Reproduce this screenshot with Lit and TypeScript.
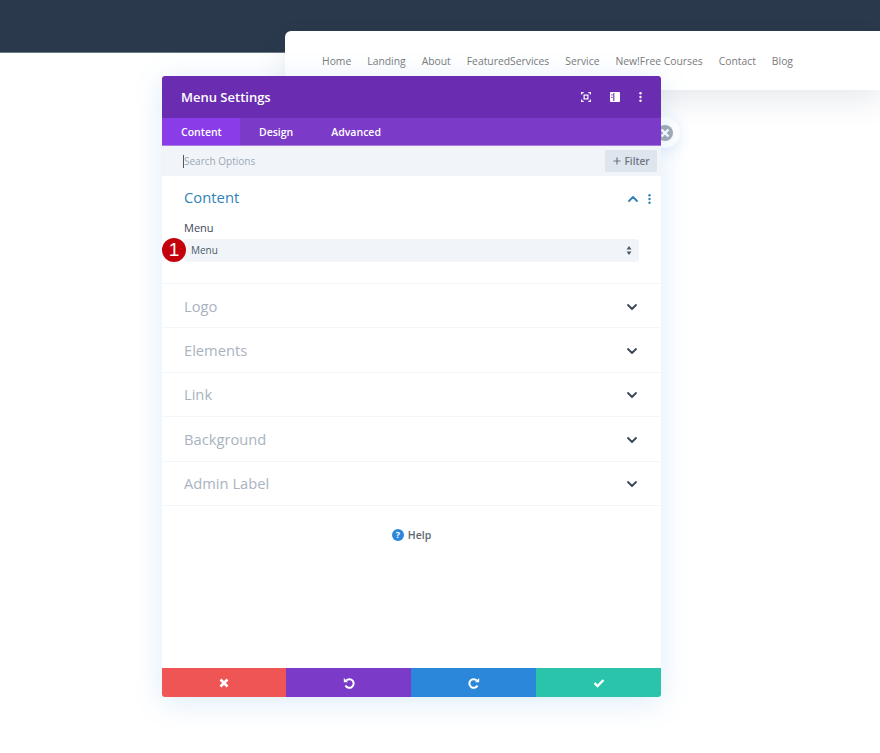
import { LitElement, html, css } from "lit";
import { customElement } from "lit/decorators.js";

const chevronDown = html`<svg class="chev" width="12" height="8" viewBox="0 0 12 8"><path d="M2 2l4 4 4-4" fill="none" stroke="#3a4656" stroke-width="1.800" stroke-linecap="round" stroke-linejoin="round"/></svg>`;
const chevronUp = html`<svg width="12" height="8" viewBox="0 0 12 8"><path d="M2 6l4-4 4 4" fill="none" stroke="#2f7fb8" stroke-width="1.800" stroke-linecap="round" stroke-linejoin="round"/></svg>`;

@customElement("app-root")
export class AppRoot extends LitElement {
  static styles = css`
    :host { display: block; position: relative; height: 753px; overflow: hidden; background: #fff; font-family: "Open Sans", "Liberation Sans", sans-serif; }
    .band { height: 53px; background: #2b394c; border-bottom: 1px solid #6d7685; box-sizing: border-box; }
    .site { position: absolute; left: 285px; top: 31px; right: 0; height: 59px; background: #fff; border-radius: 6px 0 0 0; box-shadow: 0 12px 28px rgba(40, 60, 90, .10); display: flex; align-items: center; gap: 16px; padding: 1px 0 0 37px; box-sizing: border-box; font-size: 10.350px; color: #7b7b7b; }
    .close { position: absolute; left: 645px; top: 117px; width: 35px; height: 31px; border-radius: 0 16px 16px 0; background: #fff; box-shadow: 0 4px 14px rgba(60, 120, 220, .12); display: flex; align-items: center; justify-content: flex-end; padding-right: 7px; box-sizing: border-box; }
    .modal { position: absolute; left: 162px; top: 76px; width: 499px; height: 621px; background: #fff; border-radius: 3px; display: flex; flex-direction: column; box-shadow: 0 5px 30px rgba(43, 135, 218, .16); overflow: hidden; }
    .head { height: 42px; flex: none; background: #6a2cb0; color: #fff; display: flex; align-items: center; justify-content: space-between; padding: 0 19px; font-size: 13px; font-weight: 600; }
    .head-icons { display: flex; align-items: center; gap: 19px; }
    .head-icons svg { display: block; }
    .tabs { flex: none; background: #7c3ac9; color: #fff; display: flex; font-size: 10.500px; font-weight: 600; border-bottom: 1px solid #a87be0; height: 27px; }
    .tab { display: flex; align-items: center; padding: 0 19px; }
    .tab.on { background: #8a3ce8; width: 78px; box-sizing: border-box; }
    .search { height: 30px; flex: none; background: #f1f5f9; display: flex; align-items: center; justify-content: space-between; padding: 0 4px 0 21px; }
    .placeholder { font-size: 10px; color: #9aa7b6; border-left: 1px solid #4c5866; line-height: 13px; }
    .filter { width: 52px; height: 22px; background: #dfe5ec; border-radius: 2px; font-size: 10px; font-weight: 600; color: #6b7786; display: flex; align-items: center; justify-content: center; gap: 4px; }
    .body { flex: 1; display: flex; flex-direction: column; }
    .open { height: 108px; flex: none; padding: 11px 22px 0; box-sizing: border-box; border-bottom: 1px solid #f3f5f8; position: relative; }
    .sec-head { display: flex; align-items: center; justify-content: space-between; height: 20px; }
    .sec-title { font-size: 14.800px; color: #2f82b7; }
    .sec-tools { display: flex; align-items: center; gap: 9px; margin: 4px -12px 0 0; }
    .label { font-size: 11px; color: #3d4957; font-weight: 500; margin-top: 13px; line-height: 16px; }
    .select { height: 23px; margin-top: 3px; background: #f1f5f9; border-radius: 3px; display: flex; align-items: center; justify-content: space-between; padding: 0 7px 1px; box-sizing: border-box; font-size: 10px; font-weight: 500; color: #4d5966; }
    .badge { position: absolute; left: 0; top: 62px; width: 24px; height: 24px; border-radius: 50%; background: #c4000c; color: #fff; display: flex; align-items: center; justify-content: center; font-family: "Liberation Sans", sans-serif; font-size: 19px; }
    .row { height: 44.400px; flex: none; box-sizing: border-box; border-bottom: 1px solid #f3f5f8; display: flex; align-items: center; justify-content: space-between; padding: 0 23px 0 22px; font-size: 14.700px; color: #a9b3bf; }
    .chev { margin-top: 2px; }
    .help { display: flex; align-items: center; justify-content: center; gap: 4px; margin-top: 22px; font-size: 10.500px; font-weight: 600; color: #5b6672; }
    .foot { height: 29px; flex: none; display: grid; grid-template-columns: 124px 125px 125px 125px; }
    .foot div { display: flex; align-items: center; justify-content: center; }
    .r { background: #ef5555; } .p { background: #7c3ac9; } .b { background: #2b87da; } .g { background: #29c4a9; }
  `;

  render() {
    const nav = ["Home", "Landing", "About", "FeaturedServices", "Service", "New!Free Courses", "Contact", "Blog"];
    const rows = ["Logo", "Elements", "Link", "Background", "Admin Label"];
    return html`
      <div class="band"></div>
      <div class="site">${nav.map((n) => html`<span>${n}</span>`)}</div>
      <div class="close">
        <svg width="16" height="16" viewBox="0 0 16 16"><circle cx="8" cy="8" r="8" fill="#a3aab3"/><path d="M4.500 4.500l7 7M11.500 4.500l-7 7" stroke="#fff" stroke-width="2.400"/></svg>
      </div>
      <div class="modal">
        <div class="head">
          <span>Menu Settings</span>
          <div class="head-icons">
            <svg width="10" height="10" viewBox="0 0 10 10" fill="none" stroke="#fff" stroke-width="1.100"><path d="M.6 2.600V.6h2M7.400.6h2v2M9.400 7.400v2h-2M2.600 9.400h-2v-2"/><rect x="3.100" y="3.100" width="3.800" height="3.800" stroke-width="1.200"/></svg>
            <svg width="10" height="10" viewBox="0 0 10 10"><rect width="10" height="10" rx="1" fill="#fff"/><path d="M3.800 1v8" stroke="#6a2cb0" stroke-width="1.100"/><rect x="1.300" y="2.300" width="1.200" height="1.200" fill="#6a2cb0"/><rect x="1.300" y="4.800" width="1.200" height="1.200" fill="#6a2cb0"/></svg>
            <svg width="3" height="10" viewBox="0 0 3 10" fill="#fff"><circle cx="1.500" cy="1.300" r="1.200"/><circle cx="1.500" cy="5" r="1.200"/><circle cx="1.500" cy="8.700" r="1.200"/></svg>
          </div>
        </div>
        <div class="tabs">
          <div class="tab on">Content</div>
          <div class="tab">Design</div>
          <div class="tab">Advanced</div>
        </div>
        <div class="search">
          <span class="placeholder">Search Options</span>
          <div class="filter">
            <svg width="8" height="8" viewBox="0 0 8 8"><path d="M4 .5v7M.5 4h7" stroke="#6b7786" stroke-width="1.200"/></svg>
            <span>Filter</span>
          </div>
        </div>
        <div class="body">
          <div class="open">
            <div class="sec-head">
              <span class="sec-title">Content</span>
              <div class="sec-tools">
                ${chevronUp}
                <svg width="3" height="10" viewBox="0 0 3 10" fill="#2f7fb8"><circle cx="1.500" cy="1.300" r="1.200"/><circle cx="1.500" cy="5" r="1.200"/><circle cx="1.500" cy="8.700" r="1.200"/></svg>
              </div>
            </div>
            <div class="label">Menu</div>
            <div class="select">
              <span>Menu</span>
              <svg width="6" height="9" viewBox="0 0 6 9" fill="#4d5966"><path d="M3 0l2.500 3.500h-5zM3 9L.5 5.500h5z"/></svg>
            </div>
            <div class="badge">1</div>
          </div>
          ${rows.map((r) => html`<div class="row"><span>${r}</span>${chevronDown}</div>`)}
          <div class="help">
            <svg width="12" height="12" viewBox="0 0 12 12"><circle cx="6" cy="6" r="6" fill="#2b87da"/><text x="6" y="9" text-anchor="middle" font-size="9" font-weight="700" fill="#fff" font-family="Open Sans">?</text></svg>
            <span>Help</span>
          </div>
        </div>
        <div class="foot">
          <div class="r"><svg width="10" height="10" viewBox="0 0 10 10"><path d="M1.500 1.500l7 7M8.500 1.500l-7 7" stroke="#fff" stroke-width="2.600"/></svg></div>
          <div class="p"><svg width="12" height="12" viewBox="0 0 12 12" fill="none"><path d="M3.200 3.500A4.300 4.300 0 1 1 2.500 8.500" stroke="#fff" stroke-width="2"/><path d="M.8 1v4.200H5z" fill="#fff"/></svg></div>
          <div class="b"><svg width="12" height="12" viewBox="0 0 12 12" fill="none"><path d="M8.800 3.500A4.300 4.300 0 1 0 9.500 8.500" stroke="#fff" stroke-width="2"/><path d="M11.200 1v4.200H7z" fill="#fff"/></svg></div>
          <div class="g"><svg width="12" height="10" viewBox="0 0 12 10"><path d="M1.500 5l3 3 6-6" fill="none" stroke="#fff" stroke-width="2.400"/></svg></div>
        </div>
      </div>
    `;
  }
}
